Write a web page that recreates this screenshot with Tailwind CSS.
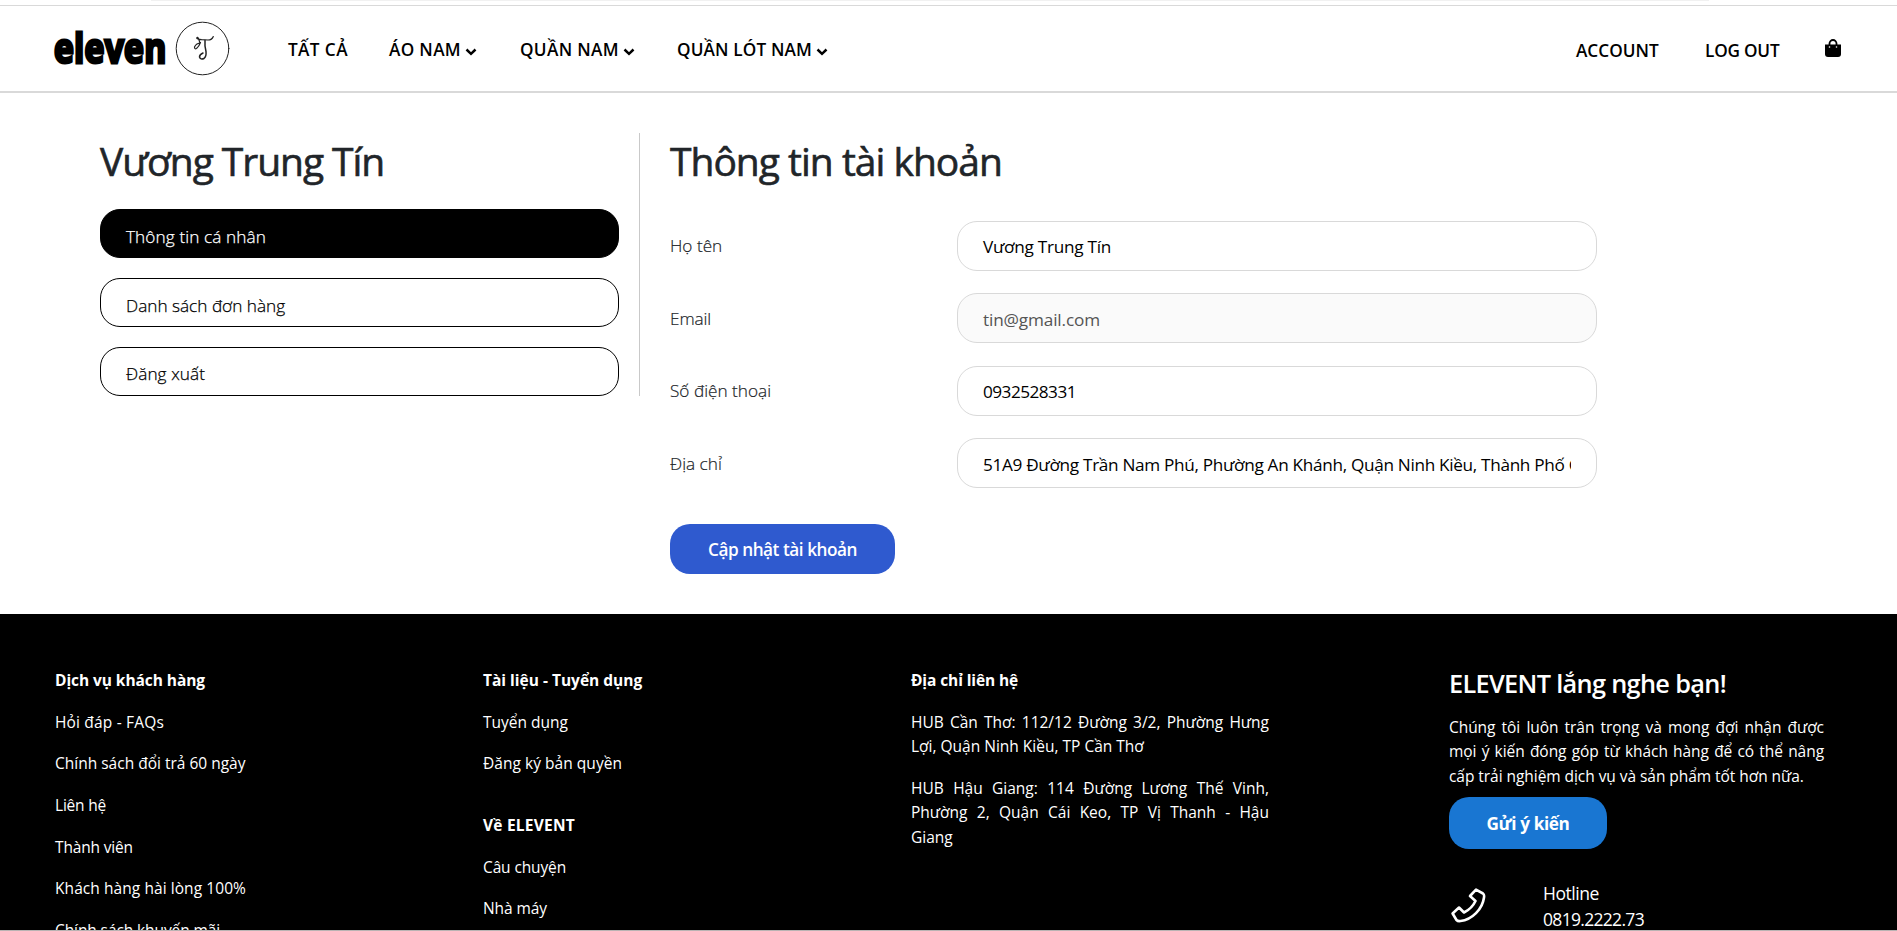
<!DOCTYPE html>
<html lang="vi">
<head>
<meta charset="utf-8">
<title>Thông tin tài khoản</title>
<script src="https://cdn.jsdelivr.net/npm/@tailwindcss/browser@4"></script>
</head>
<body class="bg-white font-['Open_Sans','Noto_Sans',sans-serif] text-[#212529]">
<div class="flex h-[931px] w-[1897px] flex-col overflow-hidden border-b border-[#b9b3b3]">
  <div class="h-[6px] shrink-0 border-b border-[#d9d9d9]"><div class="ml-[151px] h-px w-[1558px] bg-[#f1f1f1]"></div></div>
  <header class="flex h-[87px] shrink-0 items-start border-b-2 border-[#d9d9d9] pl-[54px] text-black">
    <a class="flex w-[175px] items-start">
      <span class="mt-[13px] block w-[121px] origin-left scale-x-[0.82] text-[41px]/[56px] font-bold tracking-[0.3px] whitespace-nowrap [-webkit-text-stroke:3px_black] [stroke-linejoin:round]">eleven</span>
      <svg class="mt-[15px] h-[55px] w-[55px] shrink-0" viewBox="0 0 55 55" fill="none" stroke="#222" stroke-linecap="round">
        <circle cx="27.5" cy="27.5" r="26.3" stroke-width="1"/>
        <path d="M38.300 15.500Q37 19 33 19L26.500 18.600Q22 18 21.700 17Q22.500 15.500 23.500 17.500L25 22Q21 22.500 19.500 26Q19.500 28.500 21.500 27.500Q24 25.500 25.500 21.500" stroke-width="1.200"/>
        <path d="M30 19.500Q29.500 25 31 30.500Q31.500 35.500 29 37.500Q25.500 39 24.500 36Q24.500 33.500 28 32" stroke-width="1.500"/>
      </svg>
    </a>
    <nav class="mt-[32px] ml-[59px] flex text-[17.2px]/[24px] font-semibold whitespace-nowrap">
      <a class="w-[101px] tracking-[0.4px]">TẤT CẢ</a>
      <a class="flex w-[131px] gap-1"><span class="w-[72px] tracking-[0.33px]">ÁO NAM</span><svg class="mt-[10px] h-2 w-[12px]" viewBox="0 0 12 8"><path d="M1.500 1.500 6 5.800 10.500 1.500" fill="none" stroke="#000" stroke-width="2.500"/></svg></a>
      <a class="flex w-[157px] gap-1"><span class="w-[99px] tracking-[0.34px]">QUẦN NAM</span><svg class="mt-[10px] h-2 w-[12px]" viewBox="0 0 12 8"><path d="M1.500 1.500 6 5.800 10.500 1.500" fill="none" stroke="#000" stroke-width="2.500"/></svg></a>
      <a class="flex gap-1"><span class="w-[135px] tracking-[0.14px]">QUẦN LÓT NAM</span><svg class="mt-[10px] h-2 w-[12px]" viewBox="0 0 12 8"><path d="M1.500 1.500 6 5.800 10.500 1.500" fill="none" stroke="#000" stroke-width="2.500"/></svg></a>
    </nav>
    <div class="mt-[33px] mr-[56px] ml-auto flex text-[17.2px]/[24px] font-semibold whitespace-nowrap">
      <a class="w-[129px]">ACCOUNT</a>
      <a class="w-[120px] tracking-[-0.2px]">LOG OUT</a>
      <svg class="h-[18px] w-[16px]" viewBox="0 0 16 18"><path d="M0 5.500h16v9.500a3 3 0 0 1-3 3H3a3 3 0 0 1-3-3z"/><path d="M4.500 8.500V4.500a3.500 3.500 0 0 1 7 0v4" fill="none" stroke="#000" stroke-width="1.800"/><circle cx="4.500" cy="8" r=".8" fill="#fff"/><circle cx="11.500" cy="8" r=".8" fill="#fff"/></svg>
    </div>
  </header>
  <main class="flex h-[521px] shrink-0 pt-10 pl-[100px] whitespace-nowrap">
    <section class="h-[263px] w-[540px] border-r border-[#c9c9c9] pr-5">
      <h2 class="mt-[3px] text-[39px]/[50px] font-medium tracking-[-1.05px] [-webkit-text-stroke:0.6px]">Vương Trung Tín</h2>
      <ul class="mt-[23px] flex flex-col gap-5 text-[17.2px]/[24px] font-light text-black [-webkit-text-stroke:0.25px]">
        <li class="h-[49px] rounded-[20px] border border-black bg-black pt-[15px] pl-[25px] tracking-[0.1px] text-white">Thông tin cá nhân</li>
        <li class="h-[49px] rounded-[20px] border border-black pt-[15px] pl-[25px]">Danh sách đơn hàng</li>
        <li class="h-[49px] rounded-[20px] border border-black pt-[14px] pl-[25px] tracking-[0.07px]">Đăng xuất</li>
      </ul>
    </section>
    <section class="ml-[30px] w-[927px]">
      <h2 class="mt-[3px] text-[39px]/[50px] font-medium tracking-[-1px] [-webkit-text-stroke:0.6px]">Thông tin tài khoản</h2>
      <div class="mt-[35px] flex flex-col gap-[22.4px] text-[17.2px]/[24px]">
        <label class="flex"><span class="w-[287px] pt-[13px] font-light [-webkit-text-stroke:0.2px]">Họ tên</span><span class="block h-[50px] w-[640px] rounded-[20px] border border-[#d9d9d9] px-[25px] pt-[13px] tracking-[-0.28px] text-black">Vương Trung Tín</span></label>
        <label class="flex"><span class="w-[287px] pt-[14px] font-light tracking-[-0.1px] [-webkit-text-stroke:0.2px]">Email</span><span class="block h-[50px] w-[640px] rounded-[20px] border border-[#d9d9d9] bg-[#fafafa] px-[25px] pt-[14px] tracking-[-0.15px] text-[#545454]">tin@gmail.com</span></label>
        <label class="flex"><span class="w-[287px] pt-[13px] font-light [-webkit-text-stroke:0.2px]">Số điện thoại</span><span class="block h-[50px] w-[640px] rounded-[20px] border border-[#d9d9d9] px-[25px] pt-[13px] tracking-[-0.53px] text-black">0932528331</span></label>
        <label class="flex"><span class="w-[287px] pt-[14px] font-light [-webkit-text-stroke:0.2px]">Địa chỉ</span><span class="block h-[50px] w-[640px] rounded-[20px] border border-[#d9d9d9] px-[25px] pt-[14px] tracking-[-0.32px] text-black"><span class="block overflow-hidden">51A9 Đường Trần Nam Phú, Phường An Khánh, Quận Ninh Kiều, Thành Phố Cần Thơ</span></span></label>
      </div>
      <button class="mt-9 block h-[50px] w-[225px] rounded-[20px] bg-[#2f5acf] pt-[2px] text-[17.2px]/[24px] font-semibold tracking-[-0.46px] text-white">Cập nhật tài khoản</button>
    </section>
  </main>
  <footer class="flex h-[316px] shrink-0 overflow-hidden bg-black pt-[54px] pl-[55px] text-[15.5px]/[24px] text-white">
    <div class="flex w-[428px] shrink-0 flex-col gap-[17.7px] whitespace-nowrap">
      <p class="font-bold tracking-[-0.07px]">Dịch vụ khách hàng</p>
      <p class="tracking-[0.17px]">Hỏi đáp - FAQs</p>
      <p>Chính sách đổi trả 60 ngày</p>
      <p class="tracking-[-0.2px]">Liên hệ</p>
      <p class="tracking-[-0.16px]">Thành viên</p>
      <p class="tracking-[0.07px]">Khách hàng hài lòng 100%</p>
      <p class="tracking-[-0.1px]">Chính sách khuyến mãi</p>
    </div>
    <div class="flex w-[428px] shrink-0 flex-col gap-[17.7px] whitespace-nowrap">
      <p class="font-bold">Tài liệu - Tuyển dụng</p>
      <p>Tuyển dụng</p>
      <p class="tracking-[0.04px]">Đăng ký bản quyền</p>
      <p class="mt-[20px] font-bold tracking-[0.23px]">Về ELEVENT</p>
      <p class="tracking-[-0.13px]">Câu chuyện</p>
      <p class="tracking-[-0.08px]">Nhà máy</p>
    </div>
    <div class="mr-[180px] flex w-[358px] shrink-0 flex-col gap-[17.7px] text-justify">
      <p class="font-bold tracking-[-0.1px]">Địa chỉ liên hệ</p>
      <p class="leading-[24.3px]">HUB Cần Thơ: 112/12 Đường 3/2, Phường Hưng Lợi, Quận Ninh Kiều, TP Cần Thơ</p>
      <div class="leading-[24.3px]"><p class="[text-align-last:justify]">HUB Hậu Giang: 114 Đường Lương Thế Vinh, Phường 2, Quận Cái Keo, TP Vị Thanh - Hậu</p><p>Giang</p></div>
    </div>
    <div class="w-[375px] shrink-0">
      <h4 class="text-[25.3px]/[30px] font-semibold tracking-[-0.67px]">ELEVENT lắng nghe bạn!</h4>
      <p class="mt-[17px] text-justify leading-[24.3px] tracking-[-0.05px]">Chúng tôi luôn trân trọng và mong đợi nhận được mọi ý kiến đóng góp từ khách hàng để có thể nâng cấp trải nghiệm dịch vụ và sản phẩm tốt hơn nữa.</p>
      <button class="mt-[9px] block h-[52px] w-[158px] rounded-[20px] bg-[#1976d2] pt-[2px] text-[17.2px]/[24px] font-bold tracking-[-0.38px]">Gửi ý kiến</button>
      <div class="mt-[31px] flex text-[17.5px]/[26px]">
        <svg class="mt-[8px] ml-[2px] h-[35px] w-[35px]" viewBox="0 0 35 35" fill="none" stroke="#fff" stroke-width="2.600" stroke-linejoin="round"><path d="M25 1.600 32 5.500Q33.500 6.500 33 9.500C31.500 21 21 32 9.500 33Q7 33.500 5.500 32L1.600 25.500 8 19.500 13 24.500Q21 20.500 24.500 13L19 8Z"/></svg>
        <div class="ml-[57px]"><div class="tracking-[-0.44px]">Hotline</div><div class="tracking-[-0.69px]">0819.2222.73</div></div>
      </div>
    </div>
  </footer>
</div>
</body>
</html>
